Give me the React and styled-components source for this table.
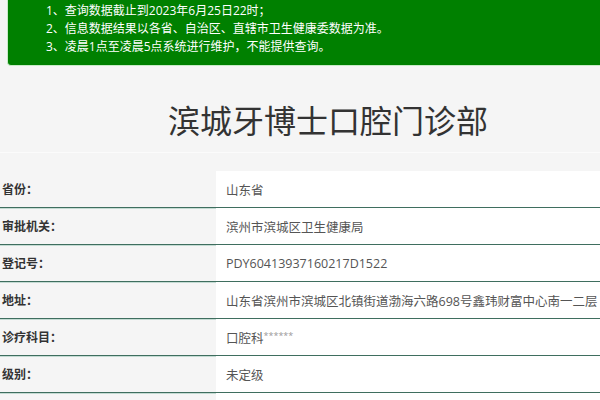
import React from "react";
import styled, { createGlobalStyle } from "styled-components";

const Global = createGlobalStyle`
  html, body { margin: 0; padding: 0; background: #f5f5f5; overflow: hidden; }
  body { font-family: "Open Sans", "Noto Sans CJK SC", sans-serif; }
`;

const Page = styled.div`
  width: 656px;
  background: #f5f5f5;
`;

const Notice = styled.div`
  margin: 0 7px;
  padding: 2px 0 9px 38px;
  background: #008000;
  border: 1px solid #c8ebc8;
  border-top: none;
  border-radius: 0 0 4px 4px;
  color: #fff;
  font-size: 12px;
  line-height: 18px;
`;

const NoticeLine = styled.div`
  white-space: nowrap;
`;

const TitleBand = styled.div`
  padding: 36px 0 12px;
  border-bottom: 1px solid #fbfbfb;
  text-align: center;
`;

const Title = styled.h1`
  margin: 0;
  font-size: 32px;
  line-height: 38px;
  font-weight: 400;
  color: #333;
`;

const Table = styled.div`
  margin-top: 18px;
`;

const Row = styled.div`
  box-sizing: border-box;
  display: grid;
  grid-template-columns: 216px 1fr;
  height: 37px;
  border-bottom: 1px solid #3f6e5f;
  box-shadow: 0 1px 0 #c4dbd3;
`;

const Label = styled.div`
  display: flex;
  align-items: center;
  padding-left: 2px;
  font-size: 12px;
  font-weight: 700;
  color: #333;
  white-space: nowrap;
`;

const Value = styled.div`
  display: flex;
  align-items: center;
  padding-left: 10px;
  background: #fff;
  font-size: 12.5px;
  color: #555;
  white-space: nowrap;
  overflow: hidden;
`;

const Stars = styled.span`
  font-size: 9px;
  color: #999;
  align-self: flex-start;
  margin-top: 10px;
`;

const rows = [
  ["省份：", "山东省"],
  ["审批机关：", "滨州市滨城区卫生健康局"],
  ["登记号：", "PDY60413937160217D1522"],
  ["地址：", "山东省滨州市滨城区北镇街道渤海六路698号鑫玮财富中心南一二层"],
  ["诊疗科目：", null],
  ["级别：", "未定级"],
  ["", ""],
];

export default function App() {
  return (
    <Page>
      <Global />
      <Notice>
        <NoticeLine>1、查询数据截止到2023年6月25日22时；</NoticeLine>
        <NoticeLine>2、信息数据结果以各省、自治区、直辖市卫生健康委数据为准。</NoticeLine>
        <NoticeLine>3、凌晨1点至凌晨5点系统进行维护，不能提供查询。</NoticeLine>
      </Notice>
      <TitleBand>
        <Title>滨城牙博士口腔门诊部</Title>
      </TitleBand>
      <Table>
        {rows.map(([k, v], i) => (
          <Row key={i}>
            <Label>{k}</Label>
            <Value>
              {v === null ? (
                <>
                  口腔科<Stars>******</Stars>
                </>
              ) : (
                v
              )}
            </Value>
          </Row>
        ))}
      </Table>
    </Page>
  );
}
